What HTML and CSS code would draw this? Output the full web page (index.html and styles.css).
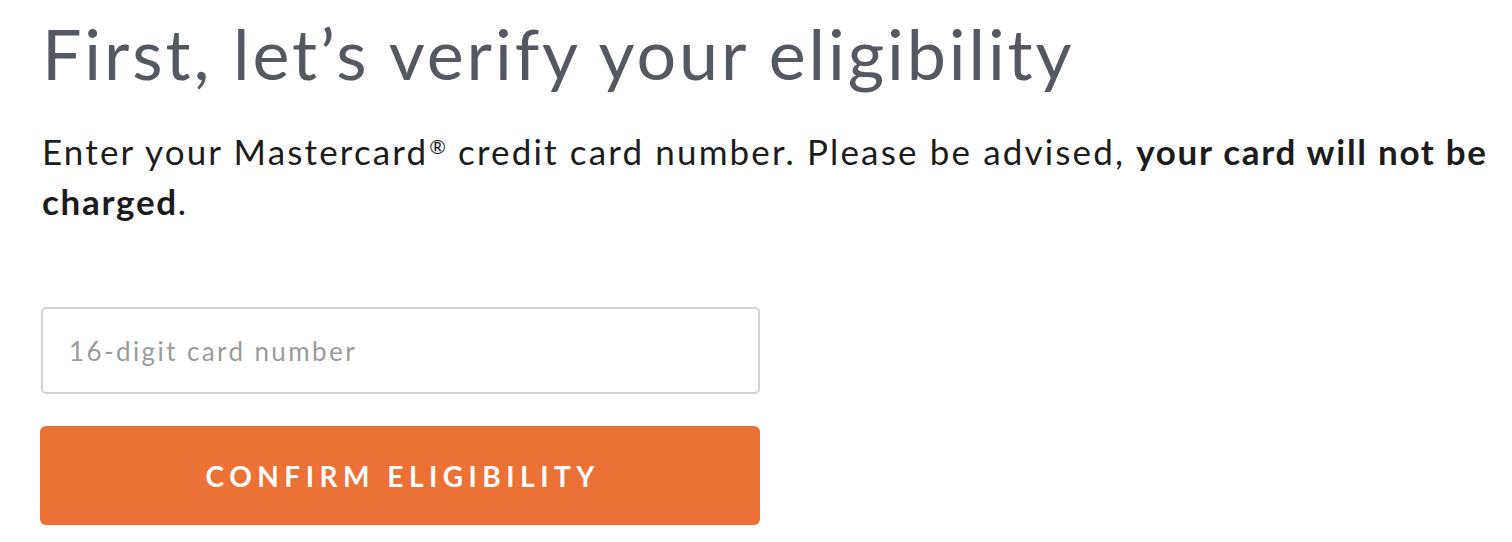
FILE: index.html
```html
<!DOCTYPE html>
<html lang="en">
<head>
<meta charset="utf-8">
<title>Verify eligibility</title>
<link rel="stylesheet" href="styles.css">
</head>
<body>
<main class="page">
  <h1 class="title">First, let’s verify your eligibility</h1>
  <p class="lead">Enter your Mastercard<span class="reg">®</span> credit card number. Please be advised, <strong>your card will not be charged</strong>.</p>
  <form class="form">
    <input class="field" type="text" placeholder="16-digit card number">
    <button class="btn" type="button">CONFIRM ELIGIBILITY</button>
  </form>
</main>
</body>
</html>
```

FILE: styles.css
```css
html, body {
  margin: 0;
  padding: 0;
  background: #ffffff;
}
.page {
  padding: 11px 0 0 40px;
  font-family: "Lato", "Noto Sans", sans-serif;
}
.title {
  margin: 0 0 0 2px;
  font-weight: 400;
  font-size: 70px;
  line-height: 84px;
  color: #545861;
  letter-spacing: 2.9px;
}
.lead {
  margin: 31px 0 0 2px;
  font-size: 35px;
  line-height: 50px;
  color: #1c1c1c;
  letter-spacing: 2.15px;
  width: 1470px;
}
.lead .reg {
  font-size: 20px;
  vertical-align: 11px;
  line-height: 0;
  letter-spacing: 1px;
  margin-left: 1px;
}
.lead strong {
  font-weight: 700;
  letter-spacing: 1.7px;
}
.form {
  margin-top: 81px;
  display: flex;
  flex-direction: column;
  gap: 32px;
  width: 720px;
}
.field {
  box-sizing: border-box;
  height: 87px;
  margin-left: 1px;
  width: 719px;
  border: 2px solid #d3d3d3;
  border-radius: 5px;
  padding: 0 26px;
  font-family: inherit;
  font-size: 26px;
  letter-spacing: 2.4px;
  color: #333;
  outline: none;
}
.field::placeholder {
  color: #9b9b9b;
}
.btn {
  height: 99px;
  border: 0;
  border-radius: 6px;
  background: #ec7135;
  color: #fff;
  font-family: inherit;
  font-weight: 700;
  font-size: 28px;
  letter-spacing: 5.5px;
  padding: 0 0 0 5.5px;
  cursor: pointer;
}
```
